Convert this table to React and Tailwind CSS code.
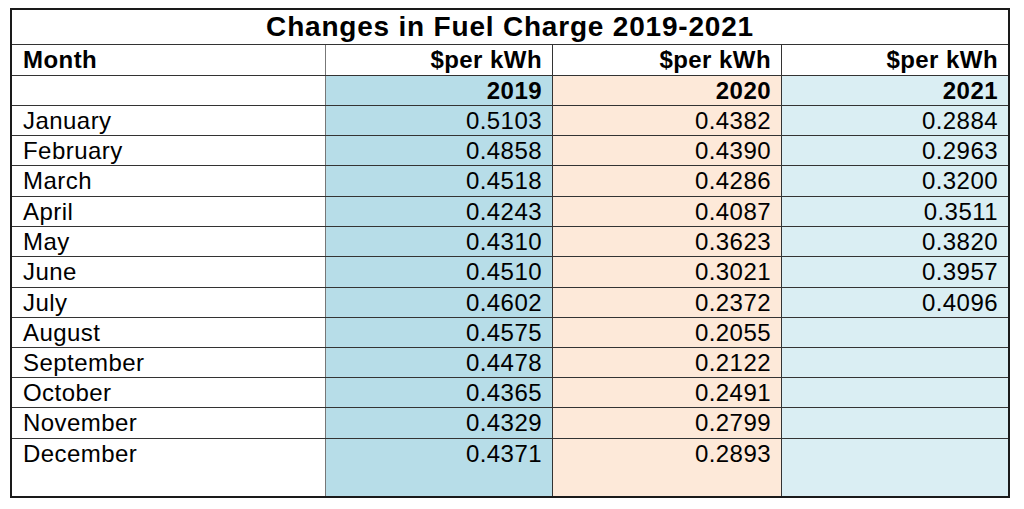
import React from "react";

const rows = [
  { m: "January", a: "0.5103", b: "0.4382", c: "0.2884", h: "h-[30px]" },
  { m: "February", a: "0.4858", b: "0.4390", c: "0.2963", h: "h-[30px]" },
  { m: "March", a: "0.4518", b: "0.4286", c: "0.3200", h: "h-[31px]" },
  { m: "April", a: "0.4243", b: "0.4087", c: "0.3511", h: "h-[30px]" },
  { m: "May", a: "0.4310", b: "0.3623", c: "0.3820", h: "h-[30px]" },
  { m: "June", a: "0.4510", b: "0.3021", c: "0.3957", h: "h-[31px]" },
  { m: "July", a: "0.4602", b: "0.2372", c: "0.4096", h: "h-[30px]" },
  { m: "August", a: "0.4575", b: "0.2055", c: "", h: "h-[30px]" },
  { m: "September", a: "0.4478", b: "0.2122", c: "", h: "h-[30px]" },
  { m: "October", a: "0.4365", b: "0.2491", c: "", h: "h-[30px]" },
  { m: "November", a: "0.4329", b: "0.2799", c: "", h: "h-[31px]" },
  { m: "December", a: "0.4371", b: "0.2893", c: "", h: "flex-1" },
];

const grid = "grid grid-cols-[314px_227px_229px_226px] border-t border-[#333]";

function Row({ h, cells, bold, bgs }) {
  return (
    <div className={`${grid} ${h}`}>
      <div className={`border-r border-[#777] pl-[11px] ${bgs[0]} ${bold ? "font-bold" : ""}`}>{cells[0]}</div>
      <div className={`border-r border-[#333] pr-[10px] text-right ${bgs[1]} ${bold ? "font-bold" : ""}`}>{cells[1]}</div>
      <div className={`border-r border-[#333] pr-[10px] text-right ${bgs[2]} ${bold ? "font-bold" : ""}`}>{cells[2]}</div>
      <div className={`pr-[10px] text-right ${bgs[3]} ${bold ? "font-bold" : ""}`}>{cells[3]}</div>
    </div>
  );
}

export default function App() {
  const colored = ["bg-white", "bg-[#b7dde8]", "bg-[#fde9d9]", "bg-[#daeef3]"];
  const plain = ["bg-white", "bg-white", "bg-white", "bg-white"];

  return (
    <div className="w-[1024px] h-[509px] bg-white pt-[8px] pl-[10px] text-black font-['Liberation_Sans',Arial,sans-serif] text-[24px] leading-[30px] tracking-[0.45px]">
      <div className="w-[1000px] h-[490px] border-2 border-[#1a1a1a] flex flex-col">
        <div className="h-[34px] flex items-center justify-center font-bold text-[28px] tracking-[0.8px]">
          Changes in Fuel Charge 2019-2021
        </div>
        <Row h="h-[31px]" bold cells={["Month", "$per kWh", "$per kWh", "$per kWh"]} bgs={plain} />
        <Row h="h-[30px]" bold cells={["", "2019", "2020", "2021"]} bgs={colored} />
        {rows.map((r) => (
          <Row key={r.m} h={r.h} cells={[r.m, r.a, r.b, r.c]} bgs={colored} />
        ))}
      </div>
    </div>
  );
}
